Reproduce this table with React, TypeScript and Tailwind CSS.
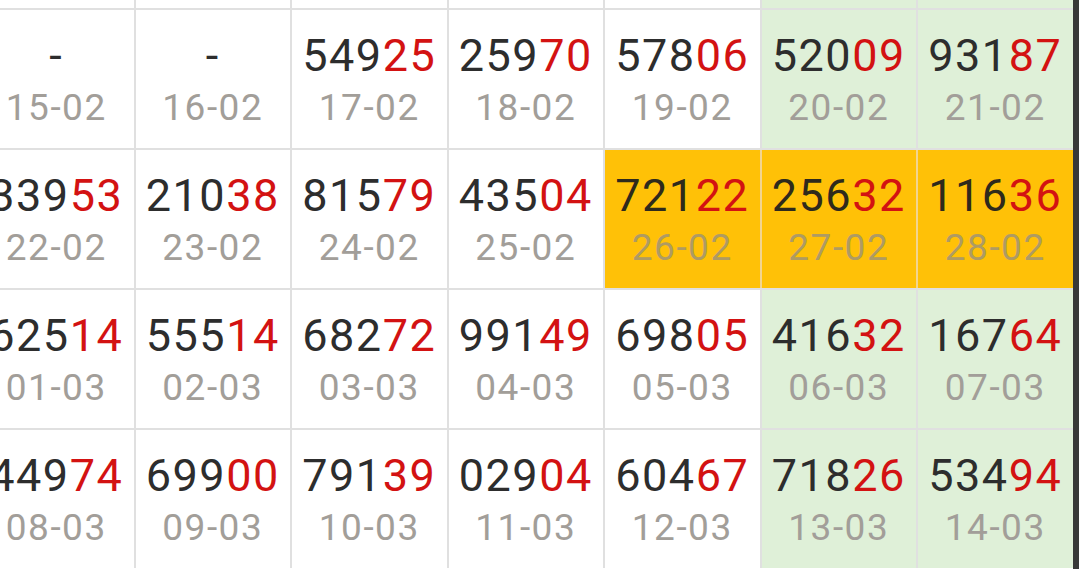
import React from "react";

type Cell = { n: string; d: string; bg: "w" | "g" | "a" };

const rows: Cell[][] = [
  [
    { n: "-", d: "15-02", bg: "w" },
    { n: "-", d: "16-02", bg: "w" },
    { n: "54925", d: "17-02", bg: "w" },
    { n: "25970", d: "18-02", bg: "w" },
    { n: "57806", d: "19-02", bg: "w" },
    { n: "52009", d: "20-02", bg: "g" },
    { n: "93187", d: "21-02", bg: "g" },
  ],
  [
    { n: "33953", d: "22-02", bg: "w" },
    { n: "21038", d: "23-02", bg: "w" },
    { n: "81579", d: "24-02", bg: "w" },
    { n: "43504", d: "25-02", bg: "w" },
    { n: "72122", d: "26-02", bg: "a" },
    { n: "25632", d: "27-02", bg: "a" },
    { n: "11636", d: "28-02", bg: "a" },
  ],
  [
    { n: "62514", d: "01-03", bg: "w" },
    { n: "55514", d: "02-03", bg: "w" },
    { n: "68272", d: "03-03", bg: "w" },
    { n: "99149", d: "04-03", bg: "w" },
    { n: "69805", d: "05-03", bg: "w" },
    { n: "41632", d: "06-03", bg: "g" },
    { n: "16764", d: "07-03", bg: "g" },
  ],
  [
    { n: "44974", d: "08-03", bg: "w" },
    { n: "69900", d: "09-03", bg: "w" },
    { n: "79139", d: "10-03", bg: "w" },
    { n: "02904", d: "11-03", bg: "w" },
    { n: "60467", d: "12-03", bg: "w" },
    { n: "71826", d: "13-03", bg: "g" },
    { n: "53494", d: "14-03", bg: "g" },
  ],
];

const topRow: Array<"w" | "g"> = ["w", "w", "w", "w", "w", "g", "g"];

function bgClass(bg: "w" | "g" | "a") {
  if (bg === "g") return "bg-[#dff0d8]";
  if (bg === "a") return "bg-[#ffc107] shadow-[2px_0_0_#f3d590]";
  return "bg-white";
}

function NumCell({ c }: { c: Cell }) {
  const amber = c.bg === "a";
  const head = c.n.length === 5 ? c.n.slice(0, 3) : c.n;
  const tail = c.n.length === 5 ? c.n.slice(3) : "";
  return (
    <div
      className={`${bgClass(c.bg)} h-[138px] flex flex-col items-center pt-[23px] overflow-hidden`}
    >
      <div
        className={`text-[45px] leading-none h-[45px] whitespace-nowrap tracking-[1.5px] ${
          amber ? "text-[#2e2a1c]" : "text-[#2d2d2d]"
        }`}
      >
        {head}
        <span className="text-[#d31212]">{tail}</span>
      </div>
      <div
        className={`mt-[11px] text-[37px] leading-none whitespace-nowrap tracking-[1.5px] ${
          amber ? "text-[#ae9b63]" : "text-[#a29e99]"
        }`}
      >
        {c.d}
      </div>
    </div>
  );
}

export default function App() {
  return (
    <div
      className="w-[1079px] h-[569px] overflow-hidden bg-white flex"
      style={{ fontFamily: "Roboto, 'Noto Sans', sans-serif" }}
    >
      <div className="w-[1073px] h-[569px] overflow-hidden">
        <div className="-ml-[21px] -mt-[130px] w-[1094px] grid grid-cols-[repeat(7,154.5px)] gap-[2px] bg-[#e0e0e0]">
          {topRow.map((b, i) => (
            <div key={`t${i}`} className={`${bgClass(b)} h-[138px]`} />
          ))}
          {rows.map((r, ri) =>
            r.map((c, ci) => <NumCell key={`${ri}-${ci}`} c={c} />)
          )}
        </div>
      </div>
      <div className="w-[6px] h-[569px] bg-[#383838]" />
    </div>
  );
}
